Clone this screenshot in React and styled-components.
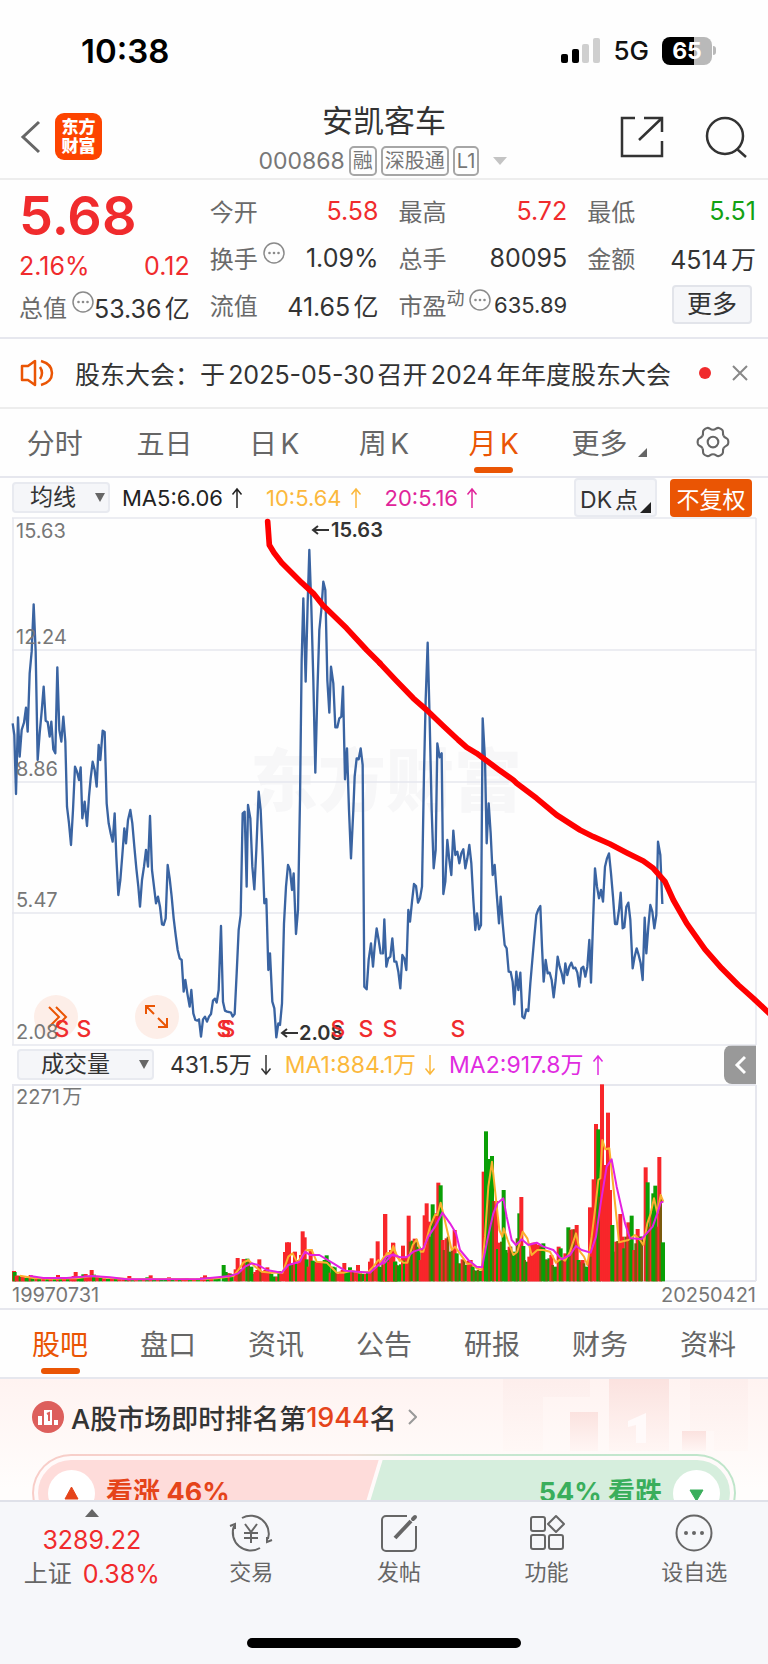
import React, { useState } from "react";
import styled, { createGlobalStyle } from "styled-components";

const red = "#f02b2d";
const green = "#12a112";
const orange = "#ea5504";
const line = "#e6e7ee";

const GlobalStyle = createGlobalStyle`
  * {
    box-sizing: border-box;
  }
  body {
    margin: 0;
    background: #fefefe;
    color: #333;
    font-family: Inter, "Noto Sans CJK SC", sans-serif;
    text-autospace: normal;
  }
  button, select {
    font-family: inherit;
    color: inherit;
    margin: 0;
    padding: 0;
    border: none;
    background: none;
  }
`;

const Page = styled.div`
  min-height: 100vh;
  overflow-x: clip;
`;

/* status bar */
const StatusBar = styled.div`
  display: flex;
  justify-content: space-between;
  align-items: center;
  height: 101px;
  padding: 0 52px 0 81px;
`;
const Time = styled.span`
  font-size: 33px;
  font-weight: 600;
  color: #000;
`;
const StatusRight = styled.div`
  display: flex;
  align-items: center;
  gap: 13px;
`;
const Network = styled.span`
  font-size: 26px;
  font-weight: 500;
  color: #111;
`;
const Battery = styled.div`
  display: flex;
  align-items: center;
  gap: 1px;
`;
const BatteryBody = styled.span`
  width: 50px;
  height: 28px;
  line-height: 28px;
  border-radius: 8px;
  text-align: center;
  font-size: 23px;
  font-weight: 700;
  color: #fff;
  background: linear-gradient(90deg, #000 65%, #b9b9b9 65%);
`;
const BatteryTip = styled.span`
  width: 3px;
  height: 9px;
  border-radius: 0 4px 4px 0;
  background: #b9b9b9;
`;

/* header */
const Header = styled.header`
  display: grid;
  grid-template-columns: 1fr auto 1fr;
  align-items: center;
  height: 79px;
  padding: 0 20px;
  border-bottom: 2px solid #ededed;
`;
const HeaderSide = styled.div`
  display: flex;
  align-items: center;
  justify-content: ${(props) => (props.$end ? "flex-end" : "flex-start")};
  gap: ${(props) => (props.$end ? "40px" : "14px")};
  padding-bottom: 10px;
`;
const IconButton = styled.button`
  display: flex;
  cursor: pointer;
`;
const Logo = styled.div`
  width: 47px;
  height: 47px;
  padding-top: 5px;
  border-radius: 9px;
  background: #fd4400;
  color: #fff;
  text-align: center;
  font-size: 17px;
  font-weight: 900;
  line-height: 19px;
`;
const TitleBlock = styled.div`
  display: flex;
  flex-direction: column;
  align-items: center;
  padding-bottom: 2px;
`;
const Title = styled.h1`
  margin: 0;
  font-size: 31px;
  font-weight: 400;
  line-height: 40px;
`;
const CodeRow = styled.div`
  display: flex;
  align-items: center;
  gap: 4px;
  height: 39px;
  color: #777;
  font-size: 23px;
`;
const Tag = styled.span`
  height: 30px;
  padding: 0 2px;
  border: 2px solid #a6a6a6;
  border-radius: 5px;
  font-size: 20px;
  line-height: 26px;
`;

/* quote */
const Quote = styled.section`
  display: grid;
  grid-template-columns: repeat(4, 1fr);
  gap: 20px;
  height: 159px;
  padding: 7px 12px 0 19px;
  border-bottom: 2px solid ${line};
`;
const Price = styled.div`
  height: 55px;
  line-height: 57px;
  font-size: 54px;
  font-weight: 600;
  color: ${red};
`;
const Cell = styled.div`
  display: flex;
  align-items: center;
  height: ${(props) => (props.$short ? "35px" : "47px")};
  white-space: nowrap;
`;
const Label = styled.span`
  font-size: 24px;
  color: #6a6a6a;
`;
const Sup = styled.span`
  padding-bottom: 16px;
  font-size: 18px;
  color: #6a6a6a;
`;
const Value = styled.span`
  margin-left: auto;
  font-size: ${(props) => (props.$small ? "22px" : "25px")};
  color: ${(props) => props.$color || "#333"};
`;
const Plain = styled.span`
  font-size: 25px;
  color: ${red};
`;
const InfoIcon = styled.svg`
  margin: 0 0 10px 5px;
  flex-shrink: 0;
`;
const MoreButton = styled.button`
  width: 80px;
  height: 39px;
  margin-left: auto;
  margin-right: 4px;
  border: 2px solid #e2e4ea;
  border-radius: 4px;
  background: #f5f6f9;
  font-size: 25px;
  line-height: 33px;
  cursor: pointer;
`;

/* notice */
const Notice = styled.section`
  display: flex;
  align-items: center;
  height: 70px;
  padding: 0 20px;
  border-bottom: 2px solid #ededed;
`;
const NoticeText = styled.p`
  flex: 1;
  margin: 0 0 0 21px;
  font-size: 25px;
  white-space: nowrap;
`;
const Dot = styled.span`
  width: 12px;
  height: 12px;
  margin-right: 21px;
  border-radius: 50%;
  background: ${red};
`;

/* tabs */
const Tabs = styled.nav`
  display: grid;
  grid-template-columns: repeat(7, 1fr);
  height: 69px;
  padding: ${(props) => (props.$inset ? "0 6px" : "0")};
  border-bottom: 2px solid ${line};
`;
const Tab = styled.button`
  position: relative;
  display: flex;
  align-items: center;
  justify-content: center;
  padding-bottom: 2px;
  font-size: 28px;
  color: ${(props) => (props.$active ? orange : "#666")};
  cursor: pointer;
  &::after {
    content: "";
    display: ${(props) => (props.$active ? "block" : "none")};
    position: absolute;
    bottom: 3px;
    width: 39px;
    height: 6px;
    border-radius: 3px;
    background: ${orange};
  }
`;
const Corner = styled.svg`
  align-self: flex-end;
  margin: 0 -12px 17px 11px;
`;

/* indicator bars */
const Bar = styled.div`
  display: flex;
  align-items: center;
  height: 39px;
  padding: 0 12px;
  font-size: ${(props) => (props.$wide ? "23px" : "22px")};
`;
const SelectBox = styled.div`
  position: relative;
  width: ${(props) => (props.$wide ? "137px" : "98px")};
  margin: ${(props) => (props.$wide ? "0 16px 0 5px" : "0 12px 0 0")};
  svg {
    position: absolute;
    right: 5px;
    top: 11px;
    pointer-events: none;
  }
`;
const Select = styled.select`
  display: block;
  appearance: none;
  width: 100%;
  height: 31px;
  padding-left: ${(props) => (props.$wide ? "22px" : "16px")};
  border: 2px solid #e8eaf0;
  border-radius: 4px;
  background: #f5f6f9;
  font-size: 23px;
  line-height: 27px;
`;
const Average = styled.span`
  display: flex;
  align-items: center;
  gap: 8px;
  margin-right: ${(props) => (props.$tight ? "13px" : "23px")};
  color: ${(props) => props.$color};
  line-height: 30px;
  text-autospace: no-autospace;
`;
const DkButton = styled.button`
  display: flex;
  align-items: center;
  height: 39px;
  margin-left: auto;
  margin-right: 13px;
  padding-left: 4px;
  border: 2px solid #e8eaf0;
  border-radius: 4px;
  background: #f5f6f9;
  font-size: 23px;
  svg {
    align-self: flex-end;
    margin: 0 4px 2px 2px;
  }
`;
const AdjustButton = styled.button`
  width: 82px;
  height: 38px;
  margin-right: 4px;
  border-radius: 4px;
  background: ${orange};
  color: #fff;
  font-size: 23px;
`;
const FoldButton = styled.button`
  display: flex;
  align-items: center;
  justify-content: center;
  width: 32px;
  height: 39px;
  margin-left: auto;
  border-radius: 8px 0 0 8px;
  background: #999;
`;

/* charts */
const ChartBox = styled.div`
  position: relative;
  z-index: 1;
  margin: 0 12px;
`;
const Chart = styled.svg`
  display: block;
  width: 100%;
  height: auto;
  overflow: visible;
  font-size: 20px;
`;
const Dates = styled.div`
  display: flex;
  justify-content: space-between;
  height: 28px;
  padding: 0 12px;
  border-bottom: 2px solid ${line};
  font-size: 20px;
  line-height: 26px;
  color: #777;
`;

/* ranking */
const Rank = styled.section`
  position: relative;
  padding: 17px 32px 0;
  background: linear-gradient(#fff3f1, #fffdfc 110px);
`;
const Podium = styled.svg`
  position: absolute;
  top: 0;
  right: 20px;
`;
const RankLink = styled.a`
  display: flex;
  align-items: center;
  height: 42px;
  color: #333;
  font-size: 27px;
  font-weight: 500;
  text-decoration: none;
  text-autospace: no-autospace;
  svg:first-child {
    margin-right: 7px;
  }
  svg:last-child {
    margin-left: 11px;
  }
`;
const Highlight = styled.span`
  color: #e5441a;
`;
const Vote = styled.div`
  position: relative;
  margin-top: 16px;
  padding: 2px;
  border-radius: 40px;
  background: linear-gradient(90deg, #f8cdc8, #f3dcd7 45%, #c9e8d3 55%, #bfe5ca);
`;
const VoteInner = styled.div`
  display: flex;
  padding: 4px;
  border-radius: 38px;
  background: #fffafa;
`;
const Side = styled.button`
  display: flex;
  align-items: center;
  gap: 11px;
  height: 66px;
  padding: 0 10px;
  font-size: 27px;
  font-weight: 700;
  line-height: 38px;
`;
const Bull = styled(Side)`
  flex: 48;
  border-radius: 33px 0 0 33px;
  background: #fedcda;
  color: #e5441a;
  clip-path: polygon(0 0, 100% 0, calc(100% - 20px) 100%, 0 100%);
`;
const Bear = styled(Side)`
  flex: 52;
  justify-content: flex-end;
  margin-left: -16px;
  border-radius: 0 33px 33px 0;
  background: #d6eedd;
  color: #3aae5c;
  clip-path: polygon(20px 0, 100% 0, 100% 100%, 0 100%);
`;

/* bottom nav */
const BottomNav = styled.footer`
  position: fixed;
  z-index: 2;
  left: 0;
  right: 0;
  bottom: 0;
  height: 164px;
  border-top: 2px solid #dfe1e9;
  background: #f6f7fa;
`;
const NavRow = styled.div`
  display: grid;
  grid-template-columns: 178fr repeat(4, 148fr);
  height: 136px;
`;
const NavItem = styled.button`
  display: flex;
  flex-direction: column;
  align-items: center;
  gap: 4px;
  padding-top: 12px;
  font-size: 22px;
  line-height: 32px;
  color: #666;
`;
const IndexItem = styled.button`
  display: flex;
  flex-direction: column;
  align-items: center;
  padding: 7px 0 0 6px;
  font-size: 24px;
  line-height: 34px;
  color: #666;
  svg {
    margin-bottom: 6px;
  }
  span {
    color: ${red};
    font-size: 25px;
  }
`;
const IndexChange = styled.div`
  display: flex;
  gap: 11px;
`;
const HomeIndicator = styled.div`
  width: 274px;
  height: 10px;
  margin: 0 auto;
  border-radius: 5px;
  background: #000;
`;

const Info = () => (
  <InfoIcon width="22" height="22" viewBox="0 0 22 22" fill="#8a8a8a">
    <circle cx="11" cy="11" r="10" fill="none" stroke="#8a8a8a" strokeWidth="1.5" />
    <circle cx="6.5" cy="11" r="1.3" />
    <circle cx="11" cy="11" r="1.3" />
    <circle cx="15.5" cy="11" r="1.3" />
  </InfoIcon>
);

const Arrow = ({ down }) => (
  <svg width="12" height="22" viewBox="0 0 12 22" fill="none" stroke="currentColor" strokeWidth="1.5">
    <path d={down ? "M6 1V20M1.5 14.5L6 20L10.5 14.5" : "M6 21V2M1.5 7.5L6 2L10.5 7.5"} />
  </svg>
);

const Caret = () => (
  <svg width="10" height="9" viewBox="0 0 10 9">
    <path d="M0 0H10L5 9Z" fill="#666" />
  </svg>
);

// chart traces are kept at three units per pixel, in a left and a right half
const priceLeft =
  "38,-200 43,-165 48,12 54,-218 59,-100 65,-180 72,-202 78,-247 83,-175 89,-350 95,-415 101,-557 107,-415 113,-90 119,-170 125,-235 131,-310 137,-208 143,-204 149,-160 154,-205 160,-122 166,-110 172,-368 178,-180 184,-145 190,-220 196,-145 201,50 207,100 213,165 219,60 225,-70 231,-55 237,-30 242,-68 247,85 254,35 261,108 267,20 272,-35 278,-85 284,-60 290,-10 296,-135 301,-90 308,-178 314,-174 320,40 326,100 332,130 338,155 344,70 349,200 355,315 361,270 367,195 373,115 378,160 384,90 391,60 397,100 403,170 409,235 415,290 420,350 426,270 432,230 438,180 444,230 450,78 456,240 462,290 468,340 474,320 480,350 486,403 491,405 497,385 503,225 509,265 515,320 521,385 527,435 533,480 539,505 545,510 551,605 556,570 562,610 569,650 574,600 580,670 586,690 592,692 597,688 603,740 609,688 615,680 621,695 627,680 633,672 639,632 645,626 650,638 656,600 663,408 669,635 675,662 681,665 687,666 693,668 698,680 704,672 710,550 716,420 722,375 728,70 734,65 740,290 744,45 751,85 757,230 763,298 769,180 776,5 782,60 788,200 793,340 799,327 805,540 810,490 817,635 823,655 829,742 835,700 840,705 846,640 852,400 858,290 864,225 870,240 876,300 881,250 888,432 894,360 900,30 905,-390 910,-575 917,-325 923,-560 928,-720 934,-550 940,-330 946,-52 952,-290 958,-480 964,-540 970,-625 976,-600 982,-330 988,-232 993,-370 1000,-320 1006,-188 1012,-188 1018,-215 1024,-220 1029,-310 1035,-32 1041,-125 1047,60 1053,205 1060,60 1064,-40 1070,-95 1076,-92 1082,-125 1088,-75 1093,590 1100,598 1106,510 1113,460 1119,530 1124,470 1130,415 1136,450 1142,490 1145,490";
const priceRight =
  "5,490 9,490 13,388 19,530 25,505 31,500 37,445 43,515 49,515 55,545 61,595 67,495 73,505 79,540 85,360 90,395 96,335 102,282 108,288 114,338 120,325 126,290 132,-50 137,-270 143,-442 149,-210 155,60 161,235 167,180 172,-140 179,-98 185,-110 190,312 196,275 202,150 208,210 214,255 220,122 226,195 232,185 238,220 244,190 250,178 256,235 262,205 268,165 274,220 280,330 286,420 291,370 297,418 303,405 308,-215 315,-90 320,160 326,40 332,130 338,255 344,225 350,310 357,400 362,320 368,400 374,465 380,475 386,545 392,546 398,575 403,643 409,545 415,600 421,548 427,680 433,685 439,658 445,663 451,580 457,510 463,440 469,375 475,358 481,348 486,470 491,575 497,510 503,550 509,548 515,570 521,622 527,570 533,500 539,530 545,550 551,580 556,520 562,555 568,530 574,518 580,535 586,533 592,548 598,590 604,535 610,530 616,560 622,530 628,450 633,578 639,400 645,235 651,290 657,325 663,300 669,335 675,230 681,205 687,190 693,250 699,320 705,402 711,402 717,360 722,308 728,415 733,412 739,350 745,338 751,390 758,535 764,500 770,475 776,495 782,520 788,570 794,383 799,490 805,410 811,345 817,365 823,415 829,375 834,155 841,195 847,342";
const trendLeft =
  "803,-805 808,-735 822,-712 845,-682 905,-622 940,-590 968,-555 1040,-485 1100,-420 1140,-380";
const trendRight =
  "0,-380 45,-332 100,-275 140,-240 190,-192 235,-150 260,-128 290,-110 320,-88 360,-58 400,-30 410,-20 470,25 530,75 600,120 640,140 690,162 740,188 790,213 820,235 855,275 880,330 920,400 975,478 1025,535 1075,585 1120,625 1174,676";

const volumeLeft =
  "42,603,r 44,606,g 50,617,r 56,617,r 62,619,g 68,621,r 74,623,r 80,624,g 86,622,g 92,615,r 98,620,g 110,623,r 118,624,g 130,625,r 142,626,g 152,625,r 164,624,g 174,615,r 182,623,g 192,624,r 204,624,g 214,622,r 221,618,r 227,606,r 236,620,g 244,620,g 250,613,g 257,612,r 264,620,r 275,600,r 282,614,g 292,621,r 302,624,g 312,625,r 324,626,g 336,627,r 348,627,g 358,627,r 370,624,r 380,626,g 388,618,r 398,626,g 408,627,r 420,627,g 432,626,r 442,622,g 452,616,r 462,624,g 474,626,r 484,627,g 496,627,g 507,622,r 518,627,g 530,627,r 540,627,g 550,625,r 560,624,r 570,627,g 582,627,r 594,626,g 606,622,r 615,616,r 624,622,g 634,626,r 646,625,g 656,624,g 671,585,g 677,606,g 683,610,g 689,610,r 695,612,g 707,598,r 713,564,r 719,600,m 725,598,m 731,567,r 742,566,g 748,575,m 754,590,g 760,612,g 766,606,r 772,600,r 778,568,r 784,605,m 790,606,r 796,600,r 802,592,r 808,605,r 814,612,g 820,620,g 826,620,g 832,620,r 838,603,g 844,610,r 855,546,r 861,517,r 867,517,r 873,583,g 879,580,m 885,545,r 891,580,g 897,570,r 903,555,r 908,484,r 914,502,r 920,568,g 926,590,r 932,538,r 938,572,g 944,575,g 950,577,r 956,575,r 962,577,r 968,575,r 974,570,g 980,556,g 986,575,g 992,608,r 998,590,g 1004,592,g 1010,608,m 1016,612,r 1022,605,r 1028,600,r 1033,579,r 1039,603,g 1045,600,g 1050,592,g 1056,606,r 1062,606,m 1068,603,r 1074,585,r 1080,610,g 1086,612,m 1092,612,g 1098,612,r 1104,606,g 1110,575,r 1115,565,r 1121,592,m 1127,592,r 1133,514,r 1139,590,g 1145,603,m 1151,570,r 1156,432,r 1162,560,g 1168,565,m 1174,560,g 1180,519,r";
const volumeRight =
  "46,575,g 52,586,g 4,592,g 10,580,m 15,432,r 21,558,g 27,575,r 33,540,r 39,518,r 45,575,g 51,585,m 57,588,g 63,583,g 69,527,r 75,572,g 81,560,r 86,437,r 92,515,m 98,512,g 104,506,r 110,508,m 116,530,g 122,570,r 128,535,r 134,436,r 140,400,r 146,455,r 152,500,m 158,403,g 164,440,m 170,430,r 175,338,r 182,346,g 188,510,r 194,540,m 200,505,r 206,500,m 212,545,g 218,540,m 224,480,r 230,550,g 236,580,m 242,580,g 248,568,r 254,570,m 260,585,g 266,572,r 272,570,r 278,590,g 284,600,m 290,602,g 296,600,m 302,603,g 311,305,r 318,184,g 324,267,g 330,390,m 336,258,g 342,393,m 348,393,r 354,537,g 360,518,r 366,515,m 371,360,g 377,540,g 383,548,g 389,530,r 395,530,m 401,545,g 407,550,g 413,505,m 418,430,g 424,381,r 430,528,g 436,570,m 442,575,g 448,560,r 454,520,r 460,518,r 466,518,r 472,525,r 478,525,r 484,530,m 490,520,g 496,568,g 502,570,m 508,565,g 514,555,r 520,585,m 526,590,g 536,530,r 542,535,g 550,570,m 556,550,r 565,472,g 572,480,m 578,478,r 584,478,m 590,465,r 596,570,g 602,575,m 608,570,r 614,580,m 620,590,g 630,412,r 636,560,m 641,328,r 648,162,r 655,178,g 661,380,m 666,43,r 672,285,r 678,285,r 684,128,r 690,360,r 697,465,g 703,545,g 709,515,r 715,513,m 721,432,r 727,500,r 733,535,g 739,500,m 745,457,r 751,490,m 755,437,g 763,540,r 773,477,r 769,520,m 781,500,g 787,500,m 797,292,r 803,337,g 809,470,m 815,430,r 820,370,g 826,347,g 832,470,m 838,261,r 844,375,m 849,517,g";
const fills = { r: "#f8262a", g: "#0a9f06", m: "#7a5a0c" };

const maYellowLeft =
  "60,617 100,624 150,626 230,625 275,618 330,624 400,628 500,627 600,628 650,625 700,618 715,600 730,578 745,570 765,590 785,605 815,608 848,608 865,560 878,550 892,578 905,560 918,541 935,540 950,575 980,578 1010,608 1030,608 1055,602 1080,608 1105,606 1120,590 1135,570 1150,580 1160,550 1172,548 1180,528 1190,555 1200,575";
const maYellowRight =
  "0,580 12,560 27,555 40,535 52,562 70,578 82,578 98,525 110,508 122,545 130,545 150,470 165,435 172,435 182,398 192,440 215,540 225,530 250,565 262,582 275,580 290,595 305,600 315,500 325,350 336,275 345,360 358,480 367,500 371,475 383,510 400,555 412,545 428,485 442,505 455,555 472,540 490,540 510,545 528,578 545,565 555,572 570,545 588,490 600,545 612,560 622,585 635,500 645,420 655,330 661,325 667,210 676,238 688,235 700,350 717,517 745,510 765,495 780,510 790,525 802,460 812,430 822,385 832,430 842,375 850,395";
const maPinkLeft =
  "90,618 130,624 200,624 275,618 330,622 380,628 600,627 690,618 715,610 735,590 755,580 775,585 800,600 845,608 865,585 900,575 915,545 930,555 958,555 1000,580 1035,602 1110,608 1135,585 1155,578 1175,555 1200,562";
const maPinkRight =
  "0,585 20,560 40,553 60,562 80,562 100,545 130,535 145,500 165,470 187,428 210,460 228,490 240,540 265,570 290,590 306,592 322,510 340,430 352,400 370,385 380,440 395,510 408,525 425,508 445,525 470,518 490,530 520,540 545,568 570,555 588,528 605,540 632,548 648,500 662,400 680,290 695,268 710,350 735,460 750,505 785,507 800,490 818,470 832,430 842,398 850,395";

const axis = [
  ["15.63", 538],
  ["12.24", 644],
  ["8.86", 776],
  ["5.47", 907],
  ["2.08", 1039],
];
const signals = [62, 84, 224, 228, 338, 366, 390, 458];

const Bars = ({ data }) =>
  data.split(" ").map((item) => {
    const [x, y, kind] = item.split(",");
    return (
      <rect key={item} x={x - 6} y={y} width={kind === "m" ? 8 : 12} height={634 - y} fill={fills[kind]} />
    );
  });

const PriceChart = () => (
  <ChartBox>
    <Chart viewBox="12 517 744 528">
      <text x="386" y="806" textAnchor="middle" fontSize="68" fontWeight="900" fill="#f7f7f8">
        东方财富
      </text>
      <path
        d="M12 518H756M12 650H756M12 782H756M12 913H756M12 1045H756M13 518V1045M756 518V1045"
        stroke={line}
        strokeWidth="1.5"
      />
      <circle cx="56" cy="1017" r="22" fill="#fdeee8" />
      <circle cx="157" cy="1017" r="22" fill="#fdeee8" />
      <g fill="none" stroke={orange} strokeWidth="2">
        <path d="M49 1007L59 1017L49 1027M56 1007L66 1017L56 1027" />
        <path d="M146 1014V1006H155M146 1006L154 1014M158 1027H167V1018M167 1027L158 1018" />
      </g>
      <g fill="none" stroke="#3a64a2" strokeWidth="7" strokeLinejoin="round">
        <polyline transform="translate(0 790) scale(0.33333)" points={priceLeft} />
        <polyline transform="translate(380 790) scale(0.33333)" points={priceRight} />
      </g>
      <g fill="#777">
        {axis.map(([label, y]) => (
          <text key={label} x="16" y={y}>
            {label}
          </text>
        ))}
      </g>
      <g fill="#333" fontWeight="600">
        <text x="331" y="537">15.63</text>
        <text x="299" y="1040">2.08</text>
      </g>
      <g fill="none" stroke="#333" strokeWidth="2">
        <path d="M329 530H313M318 526L313 530L318 534" />
        <path d="M298 1033H282M287 1029L282 1033L287 1037" />
      </g>
      <g fill={red} fontSize="23" fontWeight="500" textAnchor="middle">
        {signals.map((x) => (
          <text key={x} x={x} y="1037">
            S
          </text>
        ))}
      </g>
      <g fill="none" stroke="#f00" strokeWidth="17" strokeLinecap="round" strokeLinejoin="round">
        <polyline transform="translate(0 790) scale(0.33333)" points={trendLeft} />
        <polyline transform="translate(380 790) scale(0.33333)" points={trendRight} />
      </g>
    </Chart>
  </ChartBox>
);

const VolumeChart = () => (
  <ChartBox>
    <Chart viewBox="12 1084 744 198">
      <path d="M12 1085H756M13 1085V1281M756 1085V1281M12 1281H756" stroke={line} strokeWidth="2" fill="none" />
      <text x="16" y="1104" fill="#777">
        2271万
      </text>
      <g transform="translate(0 1070) scale(0.33333)">
        <Bars data={volumeLeft} />
      </g>
      <g transform="translate(380 1070) scale(0.33333)">
        <Bars data={volumeRight} />
      </g>
      <g fill="none" strokeWidth="6" strokeLinejoin="round">
        <g transform="translate(0 1070) scale(0.33333)">
          <polyline stroke="#fbb02e" points={maYellowLeft} />
          <polyline stroke="#e422e0" points={maPinkLeft} />
        </g>
        <g transform="translate(380 1070) scale(0.33333)">
          <polyline stroke="#fbb02e" points={maYellowRight} />
          <polyline stroke="#e422e0" points={maPinkRight} />
        </g>
      </g>
    </Chart>
  </ChartBox>
);

const Gear = () => (
  <svg width="34" height="32" viewBox="0 0 32 30" fill="none" stroke="#666" strokeWidth="2">
    {[0, 60, 120, 180, 240, 300].map((turn) => (
      <path
        key={turn}
        transform={`rotate(${turn} 16 15)`}
        d="M16 3.5C19 3.5 19 1.2 21.5 1.8C23 2.2 24 2.8 24.7 3.6C26.3 5.4 24.5 6.6 26 9.2"
      />
    ))}
    <circle cx="16" cy="15" r="5" />
  </svg>
);

const TradeIcon = () => (
  <svg width="44" height="38" viewBox="0 0 44 38" fill="none" stroke="#666" strokeWidth="2">
    <path d="M13 4A18 18 0 0 1 39 25M31 34A18 18 0 0 1 5 12" />
    <path d="M1 12L6 10V15M43 26L38 28V23" />
    <path d="M16 10L22 18L28 10M22 18V29M15 19H29M15 24H29" />
  </svg>
);

const PostIcon = () => (
  <svg width="38" height="38" viewBox="0 0 38 38" fill="none" stroke="#666" strokeWidth="2">
    <path d="M27 2H6A4 4 0 0 0 2 6V33A4 4 0 0 0 6 37H32A4 4 0 0 0 36 33V12" />
    <path d="M15 24L31 7" strokeWidth="4" />
    <path d="M33 5L35 3" strokeWidth="4" strokeLinecap="round" />
  </svg>
);

const FeatureIcon = () => (
  <svg width="36" height="38" viewBox="0 0 36 38" fill="none" stroke="#666" strokeWidth="2">
    <rect x="2" y="3" width="14" height="14" rx="2" />
    <rect x="2" y="21" width="14" height="14" rx="2" />
    <rect x="20" y="21" width="14" height="14" rx="2" />
    <path d="M27 2L35 10L27 18L19 10Z" strokeLinejoin="round" />
  </svg>
);

const WatchIcon = () => (
  <svg width="38" height="38" viewBox="0 0 38 38" fill="#666">
    <circle cx="19" cy="19" r="17.5" fill="none" stroke="#666" strokeWidth="2" />
    <circle cx="11" cy="19" r="2" />
    <circle cx="19" cy="19" r="2" />
    <circle cx="27" cy="19" r="2" />
  </svg>
);

const periods = ["分时", "五日", "日K", "周K", "月K", "更多"];
const sections = ["股吧", "盘口", "资讯", "公告", "研报", "财务", "资料"];

const App = () => {
  const [period, setPeriod] = useState("月K");
  const [section, setSection] = useState("股吧");
  return (
    <Page>
      <GlobalStyle />
      <StatusBar>
        <Time>10:38</Time>
        <StatusRight>
          <svg width="39" height="26" viewBox="0 0 39 26">
            <rect x="0" y="16" width="7" height="9" rx="2" />
            <rect x="11" y="11" width="7" height="14" rx="2" />
            <rect x="21" y="6" width="7" height="19" rx="2" fill="#cfcfcf" />
            <rect x="32" y="0" width="7" height="25" rx="2" fill="#cfcfcf" />
          </svg>
          <Network>5G</Network>
          <Battery>
            <BatteryBody>65</BatteryBody>
            <BatteryTip />
          </Battery>
        </StatusRight>
      </StatusBar>

      <Header>
        <HeaderSide>
          <IconButton aria-label="返回">
            <svg width="21" height="34" viewBox="0 0 21 34" fill="none" stroke="#666" strokeWidth="3">
              <path d="M19 2L3 17L19 32" />
            </svg>
          </IconButton>
          <Logo>
            东方
            <br />
            财富
          </Logo>
        </HeaderSide>
        <TitleBlock>
          <Title>安凯客车</Title>
          <CodeRow>
            <span>000868</span>
            <Tag>融</Tag>
            <Tag>深股通</Tag>
            <Tag>L1</Tag>
            <svg width="26" height="8" viewBox="0 0 26 8">
              <path d="M10 0H24L17 8Z" fill="#c4c4c4" />
            </svg>
          </CodeRow>
        </TitleBlock>
        <HeaderSide $end>
          <IconButton aria-label="分享">
            <svg width="44" height="42" viewBox="0 0 44 42" fill="none" stroke="#333" strokeWidth="2.5">
              <path d="M15 2H2V40H42V25M24 2H42V16M42 2L19 24" />
            </svg>
          </IconButton>
          <IconButton aria-label="搜索">
            <svg width="44" height="42" viewBox="0 0 44 42" fill="none" stroke="#333" strokeWidth="2.5">
              <circle cx="21" cy="20" r="18" />
              <path d="M33 33L42 41" />
            </svg>
          </IconButton>
        </HeaderSide>
      </Header>

      <Quote>
        <div>
          <Price>5.68</Price>
          <Cell>
            <Plain>2.16%</Plain>
            <Value $color={red}>0.12</Value>
          </Cell>
          <Cell $short>
            <Label>总值</Label>
            <Info />
            <Value>53.36亿</Value>
          </Cell>
        </div>
        <div>
          <Cell>
            <Label>今开</Label>
            <Value $color={red}>5.58</Value>
          </Cell>
          <Cell>
            <Label>换手</Label>
            <Info />
            <Value>1.09%</Value>
          </Cell>
          <Cell>
            <Label>流值</Label>
            <Value>41.65亿</Value>
          </Cell>
        </div>
        <div>
          <Cell>
            <Label>最高</Label>
            <Value $color={red}>5.72</Value>
          </Cell>
          <Cell>
            <Label>总手</Label>
            <Value>80095</Value>
          </Cell>
          <Cell>
            <Label>市盈</Label>
            <Sup>动</Sup>
            <Info />
            <Value $small>635.89</Value>
          </Cell>
        </div>
        <div>
          <Cell>
            <Label>最低</Label>
            <Value $color={green}>5.51</Value>
          </Cell>
          <Cell>
            <Label>金额</Label>
            <Value>4514万</Value>
          </Cell>
          <Cell>
            <MoreButton>更多</MoreButton>
          </Cell>
        </div>
      </Quote>

      <Notice>
        <svg width="34" height="28" viewBox="0 0 34 28" fill="none" stroke={orange} strokeWidth="2.5">
          <path d="M15 2V26L8 21H2V7H8Z" strokeLinejoin="round" />
          <path d="M20 8Q24 14 20 20M21 2Q32 5 32 14T21 26" />
        </svg>
        <NoticeText>股东大会：于2025-05-30召开2024年年度股东大会</NoticeText>
        <Dot />
        <IconButton aria-label="关闭">
          <svg width="16" height="16" viewBox="0 0 16 16" stroke="#888" strokeWidth="2">
            <path d="M1 1L15 15M15 1L1 15" />
          </svg>
        </IconButton>
      </Notice>

      <Tabs>
        {periods.map((name) => (
          <Tab key={name} $active={name === period} onClick={() => setPeriod(name)}>
            {name}
            {name === "更多" && (
              <Corner width="9" height="9" viewBox="0 0 9 9">
                <path d="M9 0V9H0Z" fill="#666" />
              </Corner>
            )}
          </Tab>
        ))}
        <Tab aria-label="设置">
          <Gear />
        </Tab>
      </Tabs>

      <Bar>
        <SelectBox>
          <Select aria-label="主图指标">
            <option>均线</option>
          </Select>
          <Caret />
        </SelectBox>
        <Average $color="#222">
          MA5:6.06
          <Arrow />
        </Average>
        <Average $color="#fbb83c">
          10:5.64
          <Arrow />
        </Average>
        <Average $color="#e0249a">
          20:5.16
          <Arrow />
        </Average>
        <DkButton>
          DK点
          <svg width="11" height="11" viewBox="0 0 11 11">
            <path d="M11 0V11H0Z" fill="#222" />
          </svg>
        </DkButton>
        <AdjustButton>不复权</AdjustButton>
      </Bar>
      <PriceChart />

      <Bar $wide>
        <SelectBox $wide>
          <Select $wide aria-label="副图指标">
            <option>成交量</option>
          </Select>
          <Caret />
        </SelectBox>
        <Average $tight $color="#333">
          431.5万
          <Arrow down />
        </Average>
        <Average $tight $color="#fbb83c">
          MA1:884.1万
          <Arrow down />
        </Average>
        <Average $tight $color="#e02be0">
          MA2:917.8万
          <Arrow />
        </Average>
        <FoldButton aria-label="收起">
          <svg width="12" height="20" viewBox="0 0 12 20" fill="none" stroke="#fff" strokeWidth="3">
            <path d="M11 2L3 10L11 18" />
          </svg>
        </FoldButton>
      </Bar>
      <VolumeChart />
      <Dates>
        <span>19970731</span>
        <span>20250421</span>
      </Dates>

      <Tabs $inset>
        {sections.map((name) => (
          <Tab key={name} $active={name === section} onClick={() => setSection(name)}>
            {name}
          </Tab>
        ))}
      </Tabs>

      <Rank>
        <Podium width="260" height="72" viewBox="0 0 260 72">
          <defs>
            <linearGradient id="podium" x1="0" y1="0" x2="0" y2="1">
              <stop offset="0" stopColor="#fbe2df" />
              <stop offset="1" stopColor="#fff6f4" />
            </linearGradient>
            <linearGradient id="backdrop" x1="0" y1="0" x2="0" y2="1">
              <stop offset="0" stopColor="#fdeeec" />
              <stop offset="1" stopColor="#fff8f6" />
            </linearGradient>
          </defs>
          <path d="M15 0H102V18H55V72H15Z" fill="url(#backdrop)" />
          <path d="M202 0H260V72H226V52H202Z" fill="url(#backdrop)" />
          <rect x="82" y="33" width="28" height="39" fill="url(#podium)" />
          <rect x="121" y="0" width="60" height="72" fill="url(#podium)" />
          <rect x="194" y="52" width="24" height="20" fill="url(#podium)" />
          <path d="M158 34V64H148V46L140 48V42Z" fill="#fffafa" />
        </Podium>
        <RankLink href="#rank">
          <svg width="32" height="32" viewBox="0 0 32 32">
            <circle cx="16" cy="16" r="16" fill="#dd5f5c" />
            <path d="M6 15H10V24H6ZM12 9H20V24H12ZM22 19H26V24H22Z" fill="#fff" />
            <path d="M15 13L17 12V20" fill="none" stroke="#dd5f5c" strokeWidth="2" />
          </svg>
          A股市场即时排名第<Highlight>1944</Highlight>名
          <svg width="9" height="16" viewBox="0 0 9 16" fill="none" stroke="#999" strokeWidth="2">
            <path d="M1 1L8 8L1 15" />
          </svg>
        </RankLink>
        <Vote>
          <VoteInner>
            <Bull>
              <svg width="47" height="47" viewBox="0 0 47 47">
                <circle cx="23.5" cy="23.5" r="23.5" fill="#fff" />
                <path d="M23.5 17L30 29H17Z" fill="#e5441a" stroke="#e5441a" strokeLinejoin="round" />
              </svg>
              看涨 46%
            </Bull>
            <Bear>
              54% 看跌
              <svg width="47" height="47" viewBox="0 0 47 47">
                <circle cx="23.5" cy="23.5" r="23.5" fill="#fff" />
                <path d="M17 20H30L23.5 31Z" fill="#3aae5c" stroke="#3aae5c" strokeLinejoin="round" />
              </svg>
            </Bear>
          </VoteInner>
        </Vote>
      </Rank>

      <BottomNav>
        <NavRow>
          <IndexItem>
            <svg width="14" height="8" viewBox="0 0 14 8">
              <path d="M7 0L14 8H0Z" fill="#666" />
            </svg>
            <span>3289.22</span>
            <IndexChange>
              上证 <span>0.38%</span>
            </IndexChange>
          </IndexItem>
          <NavItem>
            <TradeIcon />
            交易
          </NavItem>
          <NavItem>
            <PostIcon />
            发帖
          </NavItem>
          <NavItem>
            <FeatureIcon />
            功能
          </NavItem>
          <NavItem>
            <WatchIcon />
            设自选
          </NavItem>
        </NavRow>
        <HomeIndicator />
      </BottomNav>
    </Page>
  );
};

export default App;
